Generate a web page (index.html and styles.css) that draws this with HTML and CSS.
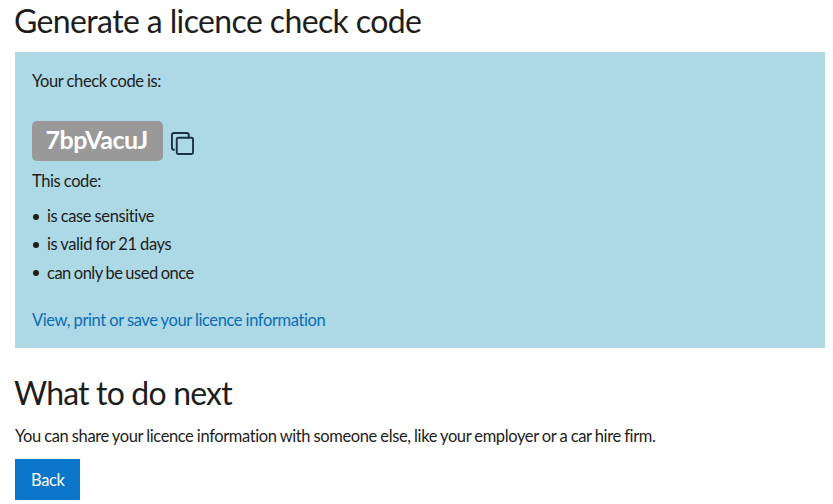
FILE: index.html
```html
<!DOCTYPE html>
<html lang="en">
<head>
<meta charset="utf-8">
<title>Generate a licence check code</title>
<link rel="stylesheet" href="styles.css">
</head>
<body>
<h1 class="title">Generate a licence check code</h1>
<section class="panel">
  <p class="intro">Your check code is:</p>
  <div class="code-row">
    <span class="code">7bpVacuJ</span>
    <svg class="copy" viewBox="0 0 24 24" width="23" height="23" fill="none" stroke="#1b3244" stroke-width="2"><rect x="6" y="6" width="17" height="17" rx="1.5"/><path d="M4 18.5 H3 A2 2 0 0 1 1 16.5 V3 A2 2 0 0 1 3 1 H16.5 A2 2 0 0 1 18.5 3 V6"/></svg>
  </div>
  <p class="lead">This code:</p>
  <ul class="list">
    <li>is case sensitive</li>
    <li>is valid for 21 days</li>
    <li>can only be used once</li>
  </ul>
  <a class="link" href="#">View, print or save your licence information</a>
</section>
<h2 class="next">What to do next</h2>
<p class="body-text">You can share your licence information with someone else, like your employer or a car hire firm.</p>
<a class="back" href="#">Back</a>
</body>
</html>
```
FILE: styles.css
```css
html, body { margin: 0; padding: 0; }
body {
  padding: 0 8px 0 15px;
  font-family: Lato, sans-serif;
  font-size: 16.5px;
  line-height: 24px;
  letter-spacing: -0.39px;
  word-spacing: -0.4px;
  color: #1d1d1b;
  background: #fff;
  height: 504px;
  box-sizing: border-box;
  overflow: hidden;
}
.title { margin: 0 0 0 -1px; padding-top: 1px; font-size: 32px; line-height: 40px; font-weight: 400; height: 51px; letter-spacing: -0.62px; word-spacing: 0; }
.panel { background: #add8e6; padding: 17px 17px 16px; height: 296px; box-sizing: border-box; }
.intro { margin: 0; }
.code-row { display: flex; align-items: center; margin-top: 28px; gap: 8px; height: 40px; }
.code { background: #999; color: #fff; font-size: 25px; font-weight: 700; line-height: 36px; padding: 0 15.5px 4px 13.5px; border-radius: 5px; letter-spacing: -0.45px; }
.copy { margin-top: 5px; }
.lead { margin: 8px 0 0; }
.list { margin: 11px 0 0; padding: 0; list-style: none; }
.list li { display: flex; align-items: center; gap: 9px; margin-bottom: 4.4px; }
.list li::before { content: ""; width: 6px; height: 6px; border-radius: 50%; background: #1d1d1b; margin-top: 1px; margin-left: 1px; margin-right: -1px; }
.list li:last-child { letter-spacing: -0.5px; word-spacing: -0.7px; }
.link { display: block; margin-top: 23px; color: #0b6cb5; text-decoration: none; }
.next { margin: 25px 0 0 -1px; font-size: 32px; line-height: 40px; font-weight: 400; letter-spacing: -0.82px; word-spacing: 0; }
.body-text { margin: 11px 0 0; }
.back { display: inline-block; margin-top: 11px; background: #0b75c9; color: #fff; padding: 8.5px 16px; text-decoration: none; }
```
